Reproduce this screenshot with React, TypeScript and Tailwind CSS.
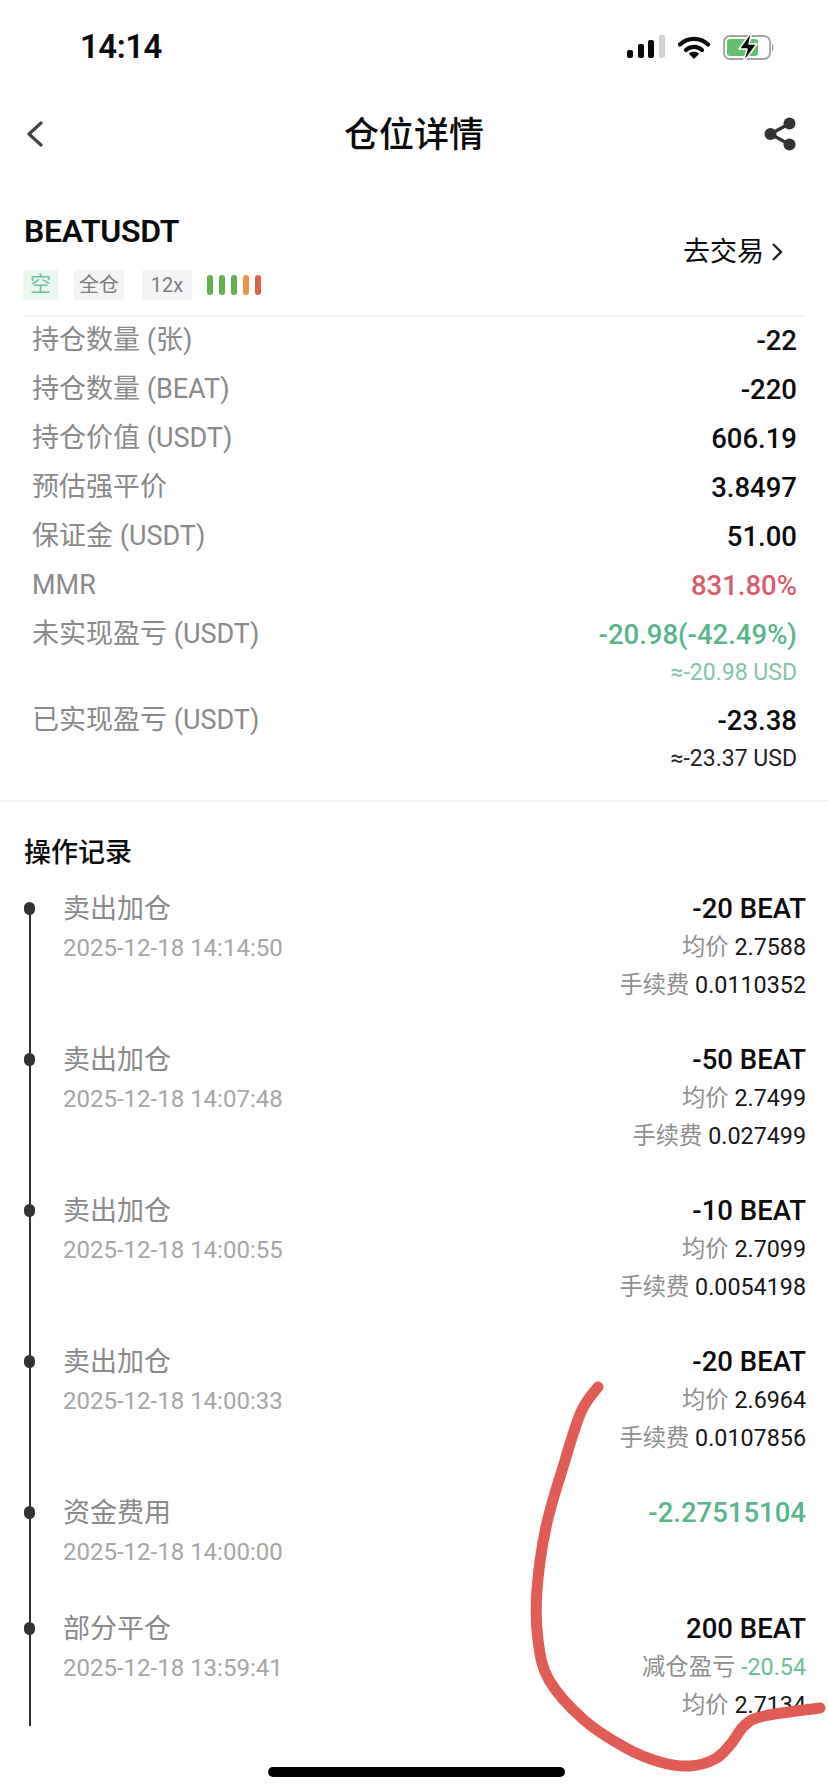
import React from "react";

const infoRows: { label: string; value: string; sub?: string; tone?: string; subTone?: string }[] = [
  { label: "持仓数量 (张)", value: "-22" },
  { label: "持仓数量 (BEAT)", value: "-220" },
  { label: "持仓价值 (USDT)", value: "606.19" },
  { label: "预估强平价", value: "3.8497" },
  { label: "保证金 (USDT)", value: "51.00" },
  { label: "MMR", value: "831.80%", tone: "text-[#d95c6e]" },
  { label: "未实现盈亏 (USDT)", value: "-20.98(-42.49%)", tone: "text-[#58b58c]", sub: "≈-20.98 USD", subTone: "text-[#82c4a6]" },
  { label: "已实现盈亏 (USDT)", value: "-23.38", sub: "≈-23.37 USD", subTone: "text-[#222222]" },
];

type Rec = {
  title: string;
  date: string;
  amount: string;
  amountTone?: string;
  lines: { k: string; v: string; vTone?: string }[];
  height: string;
};

const records: Rec[] = [
  { title: "卖出加仓", date: "2025-12-18 14:14:50", amount: "-20 BEAT", lines: [{ k: "均价", v: "2.7588" }, { k: "手续费", v: "0.0110352" }], height: "h-[151px]" },
  { title: "卖出加仓", date: "2025-12-18 14:07:48", amount: "-50 BEAT", lines: [{ k: "均价", v: "2.7499" }, { k: "手续费", v: "0.027499" }], height: "h-[151px]" },
  { title: "卖出加仓", date: "2025-12-18 14:00:55", amount: "-10 BEAT", lines: [{ k: "均价", v: "2.7099" }, { k: "手续费", v: "0.0054198" }], height: "h-[151px]" },
  { title: "卖出加仓", date: "2025-12-18 14:00:33", amount: "-20 BEAT", lines: [{ k: "均价", v: "2.6964" }, { k: "手续费", v: "0.0107856" }], height: "h-[151px]" },
  { title: "资金费用", date: "2025-12-18 14:00:00", amount: "-2.27515104", amountTone: "text-[#58b58c]", lines: [], height: "h-[116px]" },
  { title: "部分平仓", date: "2025-12-18 13:59:41", amount: "200 BEAT", lines: [{ k: "减仓盈亏", v: "-20.54", vTone: "text-[#6cbd98]" }, { k: "均价", v: "2.7134" }], height: "h-[116px]" },
];

const strokePoints: [number, number][] = [
  [598, 1387], [581, 1412], [563, 1467], [546, 1527], [537, 1590], [538, 1640], [549, 1680], [584, 1720],
  [626, 1748], [660, 1762], [690, 1766], [715, 1759], [730, 1745], [745, 1725], [764, 1716], [820, 1708],
];

function smoothPath(p: [number, number][]) {
  let d = `M${p[0][0]} ${p[0][1]}`;
  for (let i = 0; i < p.length - 1; i++) {
    const a = p[Math.max(i - 1, 0)];
    const b = p[i];
    const c = p[i + 1];
    const e = p[Math.min(i + 2, p.length - 1)];
    d += `C${b[0] + (c[0] - a[0]) / 6} ${b[1] + (c[1] - a[1]) / 6} ${c[0] - (e[0] - b[0]) / 6} ${c[1] - (e[1] - b[1]) / 6} ${c[0]} ${c[1]}`;
  }
  return d;
}

function StatusIcons() {
  return (
    <div className="flex items-center">
      <svg width="38" height="24" viewBox="0 0 38 24" className="mr-[13px]">
        <rect x="0" y="15" width="6" height="8" rx="2" fill="#0a0a0a" />
        <rect x="11" y="9" width="6" height="14" rx="2" fill="#0a0a0a" />
        <rect x="21" y="5" width="6" height="18" rx="2" fill="#0a0a0a" />
        <rect x="32" y="0" width="6" height="23" rx="2" fill="#d2d2d2" />
      </svg>
      <svg width="32" height="23" viewBox="0 0 32 23" className="mr-[13px]">
        <path d="M2 8.5C10 1 22 1 30 8.5" fill="none" stroke="#0a0a0a" strokeWidth="4.2" strokeLinecap="round" />
        <path d="M8 14C12.5 9.8 19.5 9.8 24 14" fill="none" stroke="#0a0a0a" strokeWidth="4.2" strokeLinecap="round" />
        <path d="M16 23L10.8 17.8C13.6 15.2 18.4 15.2 21.2 17.8Z" fill="#0a0a0a" />
      </svg>
      <svg width="52" height="34" viewBox="0 0 52 34">
        <rect x="1" y="6" width="46" height="23" rx="6" fill="none" stroke="#a3a3a3" strokeWidth="1.8" />
        <rect x="4" y="9" width="31" height="17" rx="3" fill="#63c06c" />
        <path d="M49 13.5C51 14.5 51 20.5 49 21.5Z" fill="#a3a3a3" />
        <path d="M29 1L16 19H24L20 33L34 14H26Z" fill="#0a0a0a" stroke="#ffffff" strokeWidth="1.5" strokeLinejoin="round" />
      </svg>
    </div>
  );
}

export default function App() {
  return (
    <div className="relative h-[1792px] w-[828px] overflow-hidden bg-white font-[family-name:Roboto,'Noto_Sans_CJK_SC',sans-serif] text-[#0b0b0b]">
      <div className="flex h-[94px] items-center justify-between pl-[80px] pr-[53px]">
        <span className="text-[33px] font-semibold tracking-[-0.5px]">14:14</span>
        <StatusIcons />
      </div>

      <div className="grid h-[80px] grid-cols-[1fr_auto_1fr] items-center pl-[26px] pr-[32px]">
        <svg width="18" height="26" viewBox="0 0 18 26">
          <path d="M15 2L3 13L15 24" fill="none" stroke="#444444" strokeWidth="3.2" strokeLinecap="round" strokeLinejoin="round" />
        </svg>
        <span className="ml-[6px] mt-[2px] text-[35px] font-medium leading-none">仓位详情</span>
        <svg width="32" height="34" viewBox="0 0 32 34" className="justify-self-end">
          <circle cx="25.5" cy="6.5" r="6" fill="#333333" />
          <circle cx="25.5" cy="27.5" r="6" fill="#333333" />
          <circle cx="6.5" cy="17" r="6" fill="#333333" />
          <path d="M25.5 6.5L6.5 17L25.5 27.5" fill="none" stroke="#333333" strokeWidth="3.4" />
        </svg>
      </div>

      <div className="mx-6 flex h-[143px] justify-between border-b-2 border-[#f3f3f3]">
        <div className="pt-[40px]">
          <div className="text-[32px] font-semibold leading-[34px] tracking-[-0.3px]">BEATUSDT</div>
          <div className="ml-[-1px] mt-[22px] flex items-center">
            <span className="flex h-[30px] w-[35px] items-center justify-center bg-[#eaf7ef] text-[21px] text-[#72c29b]">空</span>
            <span className="ml-[16px] flex h-[30px] w-[50px] items-center justify-center bg-[#f4f4f6] text-[20px] text-[#7d7d7d]">全仓</span>
            <span className="ml-[18px] flex h-[30px] w-[50px] items-center justify-center bg-[#f4f4f6] text-[20px] text-[#7d7d7d]">12x</span>
            <div className="ml-[15px] flex gap-[6px]">
              <span className="h-[20px] w-[6px] rounded-full bg-[#62b04e]" />
              <span className="h-[20px] w-[6px] rounded-full bg-[#62b04e]" />
              <span className="h-[20px] w-[6px] rounded-full bg-[#62b04e]" />
              <span className="h-[20px] w-[6px] rounded-full bg-[#ef9349]" />
              <span className="h-[20px] w-[6px] rounded-full bg-[#dd6148]" />
            </div>
          </div>
        </div>
        <div className="flex items-center self-start pr-[21px] pt-[60px] text-[27px] leading-[36px]">
          <span>去交易</span>
          <svg width="12" height="20" viewBox="0 0 12 20" className="ml-[7px]">
            <path d="M2 2L10 10L2 18" fill="none" stroke="#222222" strokeWidth="2.4" />
          </svg>
        </div>
      </div>

      <div className="h-[486px] border-b-2 border-[#f3f3f3] pl-[32px] pr-[31px]">
        <div className="mt-[-1px]">
          {infoRows.map((r) => (
            <div key={r.label} className={r.sub ? "mb-[10px]" : ""}>
              <div className="flex h-[49px] items-center justify-between">
                <span className="text-[27px] text-[#8a8a8a]">{r.label}</span>
                <span className={`text-[27.5px] font-[475] ${r.tone ?? "text-[#0b0b0b]"}`}>{r.value}</span>
              </div>
              {r.sub && <div className={`h-[27px] text-right text-[23px] leading-[27px] ${r.subTone}`}>{r.sub}</div>}
            </div>
          ))}
        </div>
      </div>

      <div className="flex h-[82px] items-end pb-[13px] pl-6 text-[27px] font-medium leading-[36px]">操作记录</div>

      <div className="relative pl-[63px] pr-[22px]">
        <div className="absolute left-[28.5px] top-[24px] h-[818px] w-[2px] bg-[#333333]" />
        {records.map((r) => (
          <div key={r.date} className={`relative flex justify-between ${r.height}`}>
            <span className="absolute left-[-39px] top-[18px] h-[13px] w-[11px] rounded-full bg-[#333333]" />
            <div>
              <div className="flex h-[50px] items-center text-[27px] leading-none text-[#8a8a8a]">{r.title}</div>
              <div className="text-[24px] leading-[29px] text-[#a6a6a6]">{r.date}</div>
            </div>
            <div className="text-right">
              <div className={`flex h-[49px] items-center justify-end text-[27.5px] font-[475] ${r.amountTone ?? "text-[#0b0b0b]"}`}>{r.amount}</div>
              {r.lines.map((l) => (
                <div key={l.k} className="h-[38px] text-[23.3px] leading-[29px]">
                  <span className="text-[#8f8f8f]">{l.k} </span>
                  <span className={l.vTone ?? "text-[#161616]"}>{l.v}</span>
                </div>
              ))}
            </div>
          </div>
        ))}
      </div>

      <svg width="828" height="1792" viewBox="0 0 828 1792" className="pointer-events-none absolute left-0 top-0">
        <path d={smoothPath(strokePoints)} fill="none" stroke="#e05c55" strokeWidth="11" strokeLinecap="round" strokeLinejoin="round" />
      </svg>

      <div className="absolute bottom-[15px] left-[268px] h-[10px] w-[297px] rounded-full bg-black" />
    </div>
  );
}
